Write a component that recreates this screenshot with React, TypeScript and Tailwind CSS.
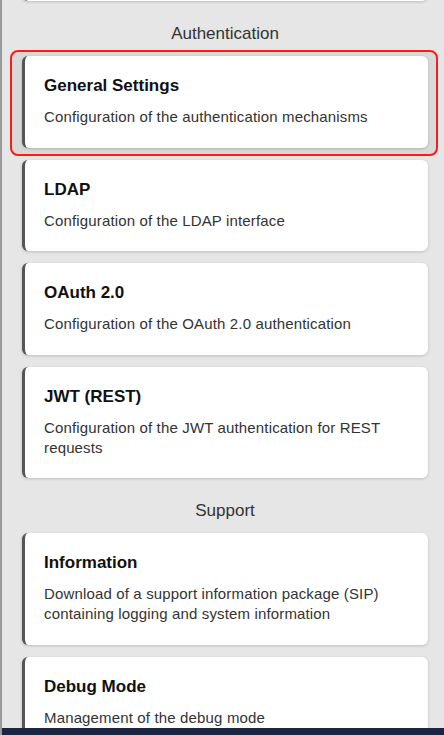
import type { ReactNode } from 'react';

interface SettingItem {
  title: string;
  description: string;
  highlighted?: boolean;
}

interface Section {
  name: string;
  items: SettingItem[];
}

const sections: Section[] = [
  {
    name: 'Authentication',
    items: [
      {
        title: 'General Settings',
        description: 'Configuration of the authentication mechanisms',
        highlighted: true,
      },
      { title: 'LDAP', description: 'Configuration of the LDAP interface' },
      { title: 'OAuth 2.0', description: 'Configuration of the OAuth 2.0 authentication' },
      {
        title: 'JWT (REST)',
        description: 'Configuration of the JWT authentication for REST requests',
      },
    ],
  },
  {
    name: 'Support',
    items: [
      {
        title: 'Information',
        description:
          'Download of a support information package (SIP) containing logging and system information',
      },
      { title: 'Debug Mode', description: 'Management of the debug mode' },
    ],
  },
];

function Card({ children }: { children: ReactNode }) {
  return (
    <div className="relative rounded-md border-l-[3px] border-[#555] bg-white pl-[19px] pr-5 pt-5 pb-[20.5px] shadow-[0_1px_3px_rgba(0,0,0,0.18)]">
      {children}
    </div>
  );
}

function SettingCard({ item }: { item: SettingItem }) {
  const card = (
    <Card>
      <h3 className="text-[17px] font-bold leading-5 text-[#111]">{item.title}</h3>
      <p className="mt-[11px] text-[15px] leading-5 tracking-[0.15px] text-[#333]">{item.description}</p>
    </Card>
  );

  if (!item.highlighted) return card;

  return (
    <div className="relative">
      {/* Markierung um die aktive Karte */}
      <div className="absolute -left-3 -right-2.5 -top-1.5 -bottom-2 rounded-lg border-2 border-[#ff1a1a] bg-[#d9d9d9]" />
      {card}
    </div>
  );
}

export default function App() {
  return (
    <div
      className="relative h-screen overflow-hidden border-l-2 border-[#9a9a9a] bg-[#e6e6e6]"
      style={{ fontFamily: '"Liberation Sans", Arial, sans-serif' }}
    >
      <main className="pl-5 pr-4">
        {/* vorherige Karte, nach oben gescrollt */}
        <div className="-mt-[91px] h-[92px] rounded-md border-l-[3px] border-[#555] bg-white shadow-[0_1px_3px_rgba(0,0,0,0.18)]" />

        {sections.map((section) => (
          <section key={section.name}>
            <h2 className="mt-[23px] mb-3 text-center text-[17px] leading-5 text-[#333]">
              {section.name}
            </h2>
            <div className="flex flex-col gap-3">
              {section.items.map((item) => (
                <SettingCard key={item.title} item={item} />
              ))}
            </div>
          </section>
        ))}
      </main>

      {/* Fußleiste */}
      <div className="absolute inset-x-0 bottom-0 h-[7px] bg-[#1b2540]" />
    </div>
  );
}
